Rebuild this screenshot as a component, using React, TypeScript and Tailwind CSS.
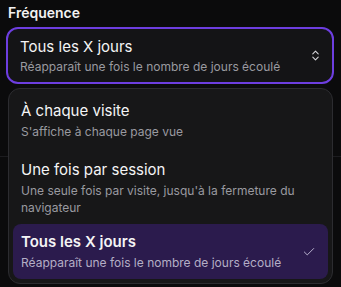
import { Check, ChevronsUpDown } from 'lucide-react';

const options = [
  { id: 'visit', label: 'À chaque visite', hint: "S'affiche à chaque page vue" },
  { id: 'session', label: 'Une fois par session', hint: "Une seule fois par visite, jusqu'à la fermeture du navigateur" },
  { id: 'days', label: 'Tous les X jours', hint: 'Réapparaît une fois le nombre de jours écoulé' },
];

export default function App() {
  const selected = 'days';
  const current = options.find((o) => o.id === selected)!;

  return (
    <div
      className="relative w-[341px] h-[287px] overflow-hidden bg-[#0b0b0c] text-white"
      style={{ fontFamily: 'Inter, "Noto Sans", sans-serif' }}
    >
      {/* page behind the popover */}
      <div className="absolute left-0 top-[156px] w-full h-px bg-[#1c1c1f]" />

      <div className="relative px-[6px] pt-[3px]">
        <label className="block pl-[2px] text-[14px] font-semibold leading-[20px] text-[#f2f2f2]">Fréquence</label>

        {/* Trigger */}
        <button className="mt-[4px] flex w-[328px] items-center justify-between rounded-[12px] border-2 border-[#6d3ee0] bg-[#141416] pl-[12px] pr-[10px] h-[57px] text-left">
          <div>
            <div className="text-[15px] leading-[20px] text-[#f4f4f5]">{current.label}</div>
            <div className="mt-[2px] text-[12px] leading-[16px] text-[#9a9aa0]">{current.hint}</div>
          </div>
          <ChevronsUpDown className="h-[13px] w-[13px] text-[#d4d4d8]" strokeWidth={2} />
        </button>

        {/* Popover */}
        <div className="absolute left-[8px] top-[88px] w-[325px] rounded-[12px] border border-[#2c2c30] bg-[#171718] p-[4px]">
          {options.map((o, i) => {
            const active = o.id === selected;
            return (
              <div
                key={o.id}
                className={`flex items-center justify-between rounded-[8px] py-[8px] pl-[8px] ${i === 1 ? 'mt-[4px]' : ''} ${active ? 'bg-[#2b1b4d] pr-[12px]' : 'pr-[8px]'}`}
              >
                <div className="pr-[16px]">
                  <div className={`text-[15px] leading-[20px] text-[#f4f4f5] ${active ? 'font-semibold' : ''}`}>{o.label}</div>
                  <div className={`mt-[2px] text-[12px] leading-[17px] ${active ? 'text-[#b4aec6]' : 'text-[#9a9aa0]'}`}>{o.hint}</div>
                </div>
                {active && <Check className="h-[14px] w-[14px] shrink-0 text-[#c9c3dd]" strokeWidth={1.5} />}
              </div>
            );
          })}
        </div>
      </div>
    </div>
  );
}
